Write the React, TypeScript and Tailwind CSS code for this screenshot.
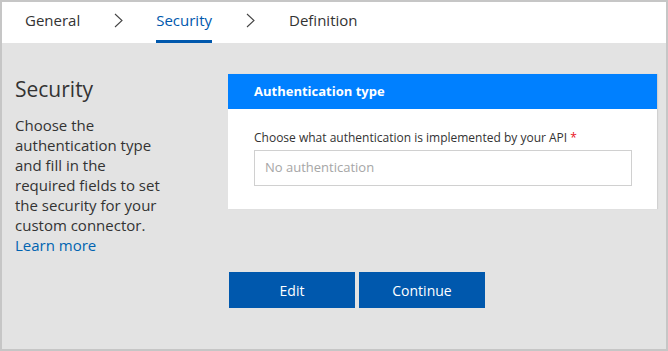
import React from 'react';

function Chevron() {
  return (
    <svg width="9" height="15" viewBox="0 0 9 15" className="text-[#444]">
      <path d="M1 1l7 6.5L1 14" fill="none" stroke="currentColor" strokeWidth="1.1" />
    </svg>
  );
}

export default function App() {
  const font = { fontFamily: '"Segoe UI", "Open Sans", "Liberation Sans", sans-serif' };
  return (
    <div
      style={font}
      className="flex h-[351px] w-[668px] flex-col border-2 border-[#c6c6c6] bg-[#e3e3e3] text-[#333]"
    >
      <div className="flex h-[41px] items-stretch bg-white pl-[23px] text-[15px]">
        <div className="flex items-center pb-[5px]">General</div>
        <div className="flex items-center pb-[5px] pl-[34px] pr-[33px]">
          <Chevron />
        </div>
        <div className="flex items-center border-b-[3px] border-[#0058ad] pb-[2px] text-[#0058ad]">
          Security
        </div>
        <div className="flex items-center pb-[5px] pl-[34px] pr-[34px]">
          <Chevron />
        </div>
        <div className="flex items-center pb-[5px]">Definition</div>
      </div>

      <div className="flex flex-1 pt-[31px]">
        <div className="w-[226px] pl-[13px]">
          <h1 className="text-[21px] leading-[30px] text-[#333]">Security</h1>
          <p className="mt-[11px] w-[180px] text-[15px] leading-[20px]">
            Choose the
            <br />
            authentication type
            <br />
            and fill in the
            <br />
            required fields to set
            <br />
            the security for your
            <br />
            custom connector.
            <br />
            <a href="#" className="text-[#0063b1]">
              Learn more
            </a>
          </p>
        </div>

        <div className="flex flex-col">
          <div className="w-[429px] bg-white shadow-[1px_0_1px_rgba(0,0,0,0.08)]">
            <div className="flex h-[35px] items-center bg-[#0080ff] pl-[26px] pt-[1px] text-[13px] font-bold text-white">
              Authentication type
            </div>
            <div className="px-[25px] pb-[23px] pl-[26px] pt-[21px]">
              <label className="block text-[12px] leading-[16px] text-[#333]">
                Choose what authentication is implemented by your API{' '}
                <span className="text-[#e81123]">*</span>
              </label>
              <div className="mt-[4px] flex h-[36px] items-center border border-[#d0d0d0] px-[10px] text-[13px] text-[#a6a6a6]">
                No authentication
              </div>
            </div>
          </div>

          <div className="mt-[63px] flex gap-[4px] pl-[1px]">
            <button className="h-[36px] w-[126px] bg-[#0058ad] text-[14px] text-white">Edit</button>
            <button className="h-[36px] w-[126px] bg-[#0058ad] text-[14px] text-white">Continue</button>
          </div>
        </div>
      </div>
    </div>
  );
}
